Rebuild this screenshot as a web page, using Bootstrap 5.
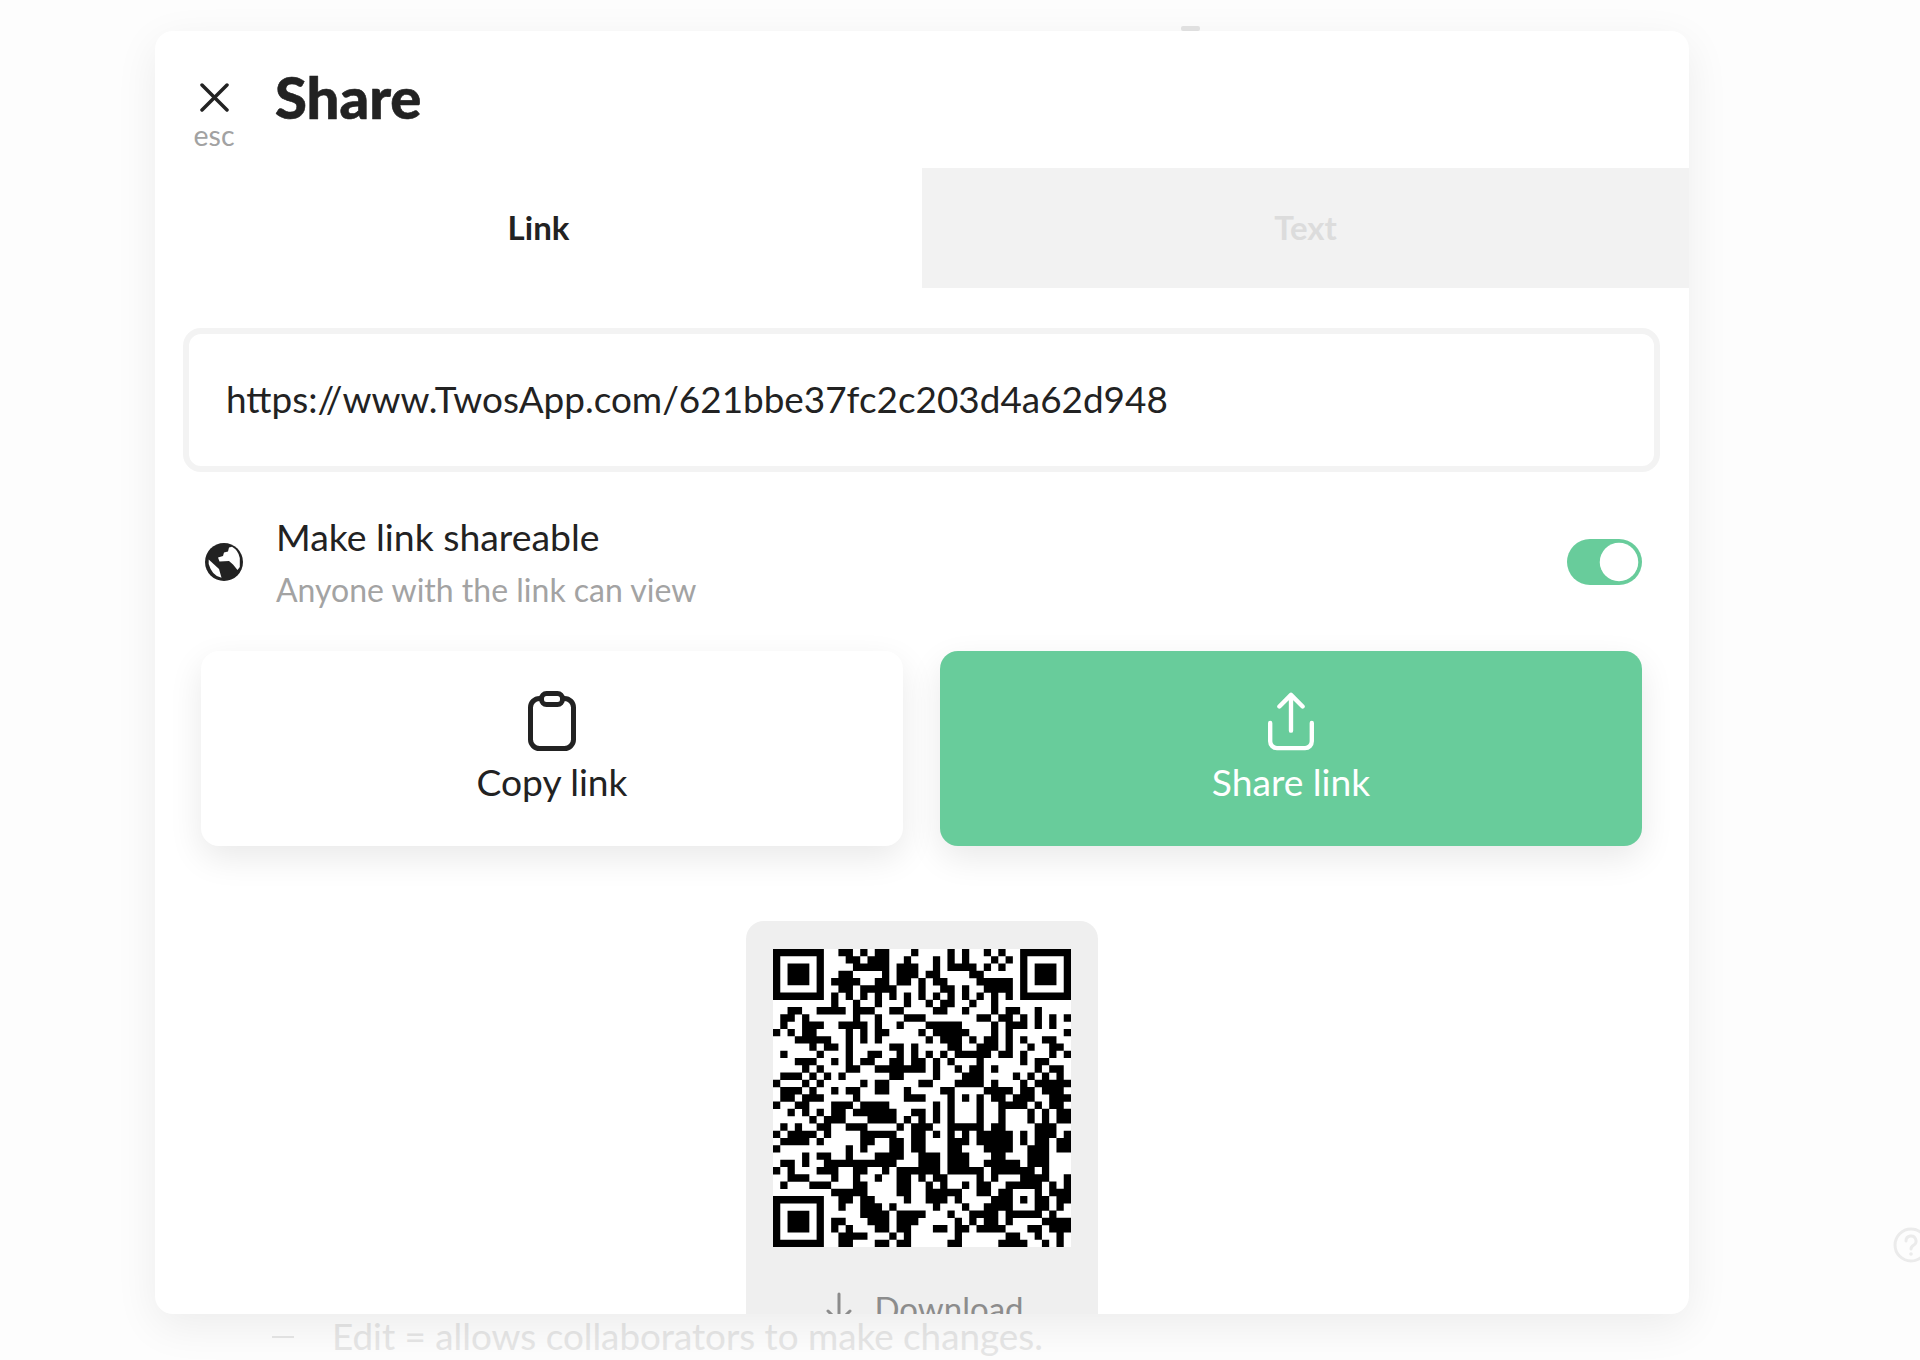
<!DOCTYPE html>
<html lang="en">
<head>
<meta charset="utf-8">
<title>Share</title>
<link href="https://cdn.jsdelivr.net/npm/bootstrap@5.3.0/dist/css/bootstrap.min.css" rel="stylesheet">
<style>
html,body{height:1360px;overflow:hidden}
body{background:#fdfdfd;font-family:"Lato","Liberation Sans",sans-serif;color:#222;position:relative}
.bg-dash{position:absolute;left:1181px;top:26px;width:19px;height:5px;background:#e4e4e4;border-radius:2px}
.help-mark{position:absolute;left:1893px;top:1227px;width:36px;height:36px}
.sheet{margin:31px 0 0 155px;width:1534px;height:1283px;background:#fff;border-radius:18px;box-shadow:0 12px 44px rgba(0,0,0,.07);overflow:hidden;position:relative;z-index:1}
.sheet-head{height:137px;padding-left:40px}
.close-col{width:38px;padding-top:52px}
.esc-label{font-size:28.5px;line-height:30px;color:#a2a2a2;margin-top:8px}
.sheet-title{font-size:58px;font-weight:900;line-height:64px;margin:0 0 0 42px;padding-top:34px;color:#222;-webkit-text-stroke:.6px #222}
.tab-item{height:120px;font-size:33px;font-weight:700}
.tab-off{background:#f2f2f2;color:#dcdcdc}
.url-box{margin:40px 29px 0 28px;height:144px;border:6px solid #f3f3f3;border-radius:18px;padding-left:37px;font-size:36.9px;color:#222}
.share-row{margin:38px 47px 0 50px}
.globe-ico{width:38px;height:38px;margin-bottom:2px}
.share-copy{margin-left:33px}
.share-title{font-size:37.4px;line-height:53px}
.share-sub{font-size:32px;line-height:53px;color:#a3a3a3}
.share-row .form-check{padding:0;margin:0 0 2px;min-height:0}
.share-row .form-check-input{width:75px;height:46px;margin:0;float:none;display:block;border:0;background-color:#68cc9b;border-radius:23px;
 background-image:url("data:image/svg+xml,%3csvg xmlns='http://www.w3.org/2000/svg' viewBox='-4 -4 8 8'%3e%3ccircle r='3.35' fill='%23fff'/%3e%3c/svg%3e");box-shadow:none}
.act-row{margin:35px 47px 0 46px;gap:37px}
.act-btn{flex:1 1 0;height:195px;border-radius:18px;border:0;font-size:37.2px;line-height:48px;padding:0;box-shadow:0 12px 34px rgba(0,0,0,.09);color:#222;background:#fff}
.act-btn:hover{background:#fff;color:#222}
.act-green,.act-green:hover{background:#68cc9b;color:#fff}
.act-btn svg{display:block;margin:0 auto}
.act-label{display:block;margin-top:7px}
.qr-card{width:352px;margin:75px auto 0;background:#efefef;border-radius:18px;padding:28px 27px 0;flex-shrink:0}
.qr-img{width:298px;height:298px;display:block}
.dl-row{margin-top:36px;color:#8c8c8c;font-size:33px;line-height:50px;gap:20px;padding-left:4px}
.behind-line{margin:1px 0 0 272px;font-size:36.8px;line-height:43px;color:#e6e6e6;gap:38px}
.behind-dash{width:22px;height:2px;background:#e6e6e6}
</style>
</head>
<body>
<div class="bg-dash"></div>
<svg class="help-mark" viewBox="0 0 36 36" fill="none" aria-hidden="true"><circle cx="18" cy="18" r="16" stroke="#ebebeb" stroke-width="3"/><path d="M13 14a5 5 0 1 1 7.500 4.300c-1.500.9-2.500 1.700-2.500 3.700" stroke="#ebebeb" stroke-width="3" stroke-linecap="round"/><circle cx="18" cy="27" r="1.800" fill="#ebebeb"/></svg>

<div class="sheet d-flex flex-column">
  <div class="sheet-head d-flex align-items-start flex-shrink-0">
    <div class="close-col d-flex flex-column align-items-center">
      <svg width="29" height="29" viewBox="0 0 29 29" fill="none" aria-hidden="true"><path d="M2 2 27 27M27 2 2 27" stroke="#222" stroke-width="3.500" stroke-linecap="round"/></svg>
      <span class="esc-label">esc</span>
    </div>
    <h1 class="sheet-title">Share</h1>
  </div>
  <div class="row g-0 flex-shrink-0">
    <div class="col-6 tab-item d-flex align-items-center justify-content-center">Link</div>
    <div class="col-6 tab-item tab-off d-flex align-items-center justify-content-center">Text</div>
  </div>
  <div class="url-box d-flex align-items-center flex-shrink-0">https://www.TwosApp.com/621bbe37fc2c203d4a62d948</div>
  <div class="share-row d-flex align-items-center flex-shrink-0">
    <svg class="globe-ico" viewBox="0 0 38 38" aria-hidden="true"><circle cx="19" cy="19" r="19" fill="#222"/><path fill="#fff" d="M24 4.500 27 3.800Q33.500 7.500 34.800 15L34.800 24 32.500 27 28 21.500 24 18 14.500 18.500 13 14.500 18 13 19 9.500 23 8.500Z"/><path fill="#fff" d="M3.700 16.500 14 26 16.500 34.800Q7 33 3.700 21Z"/></svg>
    <div class="share-copy flex-grow-1">
      <div class="share-title">Make link shareable</div>
      <div class="share-sub">Anyone with the link can view</div>
    </div>
    <div class="form-check form-switch"><input class="form-check-input" type="checkbox" role="switch" checked aria-label="Make link shareable"></div>
  </div>
  <div class="act-row d-flex flex-shrink-0">
    <button type="button" class="btn act-btn">
      <svg width="48" height="60" viewBox="0 0 48 60" fill="none" aria-hidden="true"><rect x="2.500" y="7.500" width="43" height="50" rx="9" stroke="#222" stroke-width="5"/><rect x="13.500" y="2.500" width="21" height="11" rx="5" fill="#fff" stroke="#222" stroke-width="5"/></svg>
      <span class="act-label">Copy link</span>
    </button>
    <button type="button" class="btn act-btn act-green">
      <svg width="50" height="60" viewBox="0 0 50 62" fill="none" aria-hidden="true"><path d="M25 41V4M13 16 25 4 37 16M3.500 33V52a7 7 0 0 0 7 7H39.500a7 7 0 0 0 7-7V33" stroke="#fff" stroke-width="4.500" stroke-linecap="round" stroke-linejoin="round"/></svg>
      <span class="act-label">Share link</span>
    </button>
  </div>
  <div class="qr-card">
    <svg class="qr-img" viewBox="0 0 41 41" aria-label="QR code" role="img">
      <rect width="41" height="41" fill="#fff"/>
      <path fill="#000" fill-rule="evenodd" d="M0 0h7v7H0zM1 1v5h5V1zM2 2h3v3H2zM34 0h7v7h-7zM35 1v5h5V1zM36 2h3v3h-3zM0 34h7v7H0zM1 35v5h5v-5zM2 36h3v3H2z"/>
      <path stroke="#000" stroke-width="1.020" fill="none" d="M9 .5H11M12 .5H13M14 .5H16M19 .5H20M24 .5H25M26 .5H27M29 .5H30M31 .5H32
M10 1.500H12M13 1.500H16M18 1.500H19M22 1.500H23M24 1.500H25M26 1.500H27M30 1.500H31M32 1.500H33
M11 2.500H16M17 2.500H20M22 2.500H23M24 2.500H28M29 2.500H30M31 2.500H32
M9 3.500H11M15 3.500H16M17 3.500H20M21 3.500H23M27 3.500H29
M8 4.500H12M14 4.500H16M17 4.500H19M20 4.500H21M22 4.500H24M28 4.500H33
M9 5.500H11M12 5.500H17M20 5.500H21M23 5.500H25M26 5.500H27M29 5.500H33
M8 6.500H9M10 6.500H11M12 6.500H13M14 6.500H15M16 6.500H17M18 6.500H19M20 6.500H21M22 6.500H23M24 6.500H25M26 6.500H27M28 6.500H29M30 6.500H31M32 6.500H33
M8 7.500H9M11 7.500H12M14 7.500H15M18 7.500H19M21 7.500H22M23 7.500H25M27 7.500H28M30 7.500H31
M2 8.500H4M6 8.500H10M11 8.500H14M16 8.500H18M22 8.500H24M26 8.500H27M30 8.500H31M32 8.500H34M36 8.500H37
M1 9.500H3M4 9.500H5M11 9.500H12M14 9.500H15M18 9.500H21M28 9.500H30M31 9.500H33M34 9.500H35M36 9.500H37M38 9.500H39M40 9.500H41
M1 10.500H2M4 10.500H7M9 10.500H13M14 10.500H15M17 10.500H18M21 10.500H26M30 10.500H31M32 10.500H35M36 10.500H37M38 10.500H39
M0 11.500H1M2 11.500H3M4 11.500H6M10 11.500H11M12 11.500H13M14 11.500H16M20 11.500H21M22 11.500H27M30 11.500H31M32 11.500H33M40 11.500H41
M3 12.500H8M10 12.500H11M12 12.500H13M14 12.500H15M21 12.500H22M23 12.500H26M27 12.500H28M29 12.500H31M32 12.500H33M34 12.500H35M37 12.500H39
M5 13.500H6M7 13.500H9M10 13.500H11M16 13.500H18M19 13.500H20M24 13.500H26M28 13.500H31M32 13.500H33M35 13.500H36M38 13.500H40
M1 14.500H2M6 14.500H7M10 14.500H11M13 14.500H15M17 14.500H18M19 14.500H20M21 14.500H22M23 14.500H24M25 14.500H30M31 14.500H33M34 14.500H35M38 14.500H39M40 14.500H41
M3 15.500H6M8 15.500H9M10 15.500H11M12 15.500H14M16 15.500H18M19 15.500H21M22 15.500H23M24 15.500H25M28 15.500H29M34 15.500H35M36 15.500H38
M4 16.500H5M6 16.500H7M10 16.500H12M14 16.500H19M19 16.500H21M22 16.500H23M25 16.500H26M27 16.500H29M30 16.500H31M36 16.500H37M38 16.500H40
M1 17.500H4M5 17.500H6M7 17.500H8M9 17.500H10M16 17.500H18M22 17.500H23M26 17.500H29M33 17.500H34M35 17.500H36M37 17.500H38M39 17.500H40
M0 18.500H1M4 18.500H5M6 18.500H7M12 18.500H13M14 18.500H16M20 18.500H22M25 18.500H29M30 18.500H31M34 18.500H35M36 18.500H41
M1 19.500H4M5 19.500H6M8 19.500H9M10 19.500H12M14 19.500H16M18 19.500H19M23 19.500H25M29 19.500H33M34 19.500H36M37 19.500H40
M1 20.500H3M4 20.500H7M11 20.500H12M18 20.500H21M24 20.500H25M26 20.500H27M28 20.500H29M30 20.500H32M33 20.500H36M38 20.500H41
M0 21.500H1M3 21.500H5M8 21.500H11M12 21.500H16M22 21.500H23M24 21.500H25M28 21.500H29M31 21.500H35M36 21.500H37M38 21.500H40
M2 22.500H3M4 22.500H5M6 22.500H7M8 22.500H10M11 22.500H17M19 22.500H21M22 22.500H23M24 22.500H25M28 22.500H29M31 22.500H32M35 22.500H36M37 22.500H38M39 22.500H41
M5 23.500H6M7 23.500H10M13 23.500H17M18 23.500H19M20 23.500H21M22 23.500H23M24 23.500H25M28 23.500H29M31 23.500H32M35 23.500H36M37 23.500H38M39 23.500H41
M1 24.500H2M3 24.500H4M6 24.500H8M10 24.500H13M17 24.500H18M19 24.500H22M24 24.500H29M30 24.500H32M36 24.500H39
M0 25.500H1M2 25.500H6M7 25.500H8M12 25.500H17M19 25.500H21M22 25.500H23M24 25.500H25M26 25.500H27M28 25.500H33M34 25.500H35M36 25.500H39M40 25.500H41
M1 26.500H5M6 26.500H7M12 26.500H14M16 26.500H18M19 26.500H21M24 26.500H27M28 26.500H33M34 26.500H35M36 26.500H38M39 26.500H41
M0 27.500H1M10 27.500H11M12 27.500H13M16 27.500H18M19 27.500H21M24 27.500H26M29 27.500H33M35 27.500H38M39 27.500H41
M4 28.500H5M6 28.500H8M10 28.500H11M14 28.500H18M20 28.500H23M24 28.500H27M30 28.500H32M35 28.500H38
M1 29.500H3M4 29.500H5M7 29.500H17M20 29.500H23M24 29.500H27M29 29.500H34M35 29.500H38
M0 30.500H1M2 30.500H3M6 30.500H9M11 30.500H13M15 30.500H16M17 30.500H23M24 30.500H29M30 30.500H36M37 30.500H38
M2 31.500H5M8 31.500H9M11 31.500H12M14 31.500H15M17 31.500H19M20 31.500H21M22 31.500H24M28 31.500H29M30 31.500H31M34 31.500H38M40 31.500H41
M1 32.500H2M5 32.500H8M11 32.500H13M17 32.500H19M21 32.500H22M23 32.500H24M26 32.500H27M28 32.500H30M32 32.500H37M38 32.500H39M40 32.500H41
M8 33.500H13M17 33.500H19M21 33.500H26M28 33.500H30M31 33.500H33M36 33.500H37M38 33.500H41
M9 34.500H11M12 34.500H14M18 34.500H19M21 34.500H24M25 34.500H26M30 34.500H33M34 34.500H35M36 34.500H38M39 34.500H41
M9 35.500H10M12 35.500H15M16 35.500H17M22 35.500H23M26 35.500H27M29 35.500H33M36 35.500H38M39 35.500H40
M12 36.500H16M17 36.500H21M24 36.500H25M27 36.500H31M32 36.500H37M38 36.500H39
M8 37.500H10M13 37.500H16M17 37.500H20M25 37.500H26M27 37.500H28M29 37.500H31M32 37.500H33M37 37.500H41
M8 38.500H9M10 38.500H11M14 38.500H16M17 38.500H19M22 38.500H24M25 38.500H27M28 38.500H32M35 38.500H37M38 38.500H41
M9 39.500H13M16 39.500H17M18 39.500H19M25 39.500H26M32 39.500H34M36 39.500H37M39 39.500H40
M9 40.500H11M14 40.500H16M17 40.500H19M24 40.500H26M31 40.500H35M37 40.500H38M39 40.500H40"/>
    </svg>
    <div class="dl-row d-flex align-items-center justify-content-center">
      <svg width="30" height="36" viewBox="0 0 30 36" fill="none" aria-hidden="true"><path d="M15 4V32M4 21 15 32 26 21" stroke="#8c8c8c" stroke-width="3" stroke-linecap="round" stroke-linejoin="round"/></svg>
      <span>Download</span>
    </div>
  </div>
</div>
<div class="behind-line d-flex align-items-center"><span class="behind-dash"></span><span>Edit = allows collaborators to make changes.</span></div>
</body>
</html>
